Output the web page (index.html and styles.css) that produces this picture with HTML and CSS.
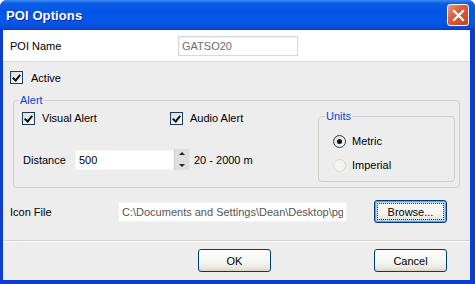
FILE: index.html
```html
<!DOCTYPE html>
<html lang="en">
<head>
  <meta charset="UTF-8" />
  <title>POI Options</title>
  <link rel="stylesheet" href="styles.css">
</head>
<body>

  <div class="window">
    <div class="titlebar">
      <span class="title">POI Options</span>
      <button class="close" aria-label="Close">
        <svg width="13" height="13" viewBox="0 0 13 13">
          <path d="M2 2 L11 11 M11 2 L2 11" stroke="#fff" stroke-width="2.2" stroke-linecap="square" />
        </svg>
      </button>
    </div>

    <div class="client">
      <div class="name-row">
        <label class="name-label">POI Name</label>
        <input class="field name-field" type="text" value="GATSO20" disabled>
      </div>

      <div class="body">
        <div class="active-row">
          <span class="check checked"></span>
          <span>Active</span>
        </div>

        <fieldset class="group alert">
          <legend>Alert</legend>
          <div class="alert-inner">
            <div class="alert-left">
              <div class="check-row">
                <div class="check-item visual">
                  <span class="check checked"></span>
                  <span>Visual Alert</span>
                </div>
                <div class="check-item">
                  <span class="check checked"></span>
                  <span>Audio Alert</span>
                </div>
              </div>
              <div class="distance-row">
                <span class="distance-label">Distance</span>
                <input class="field distance-field" type="text" value="500">
                <div class="spinner">
                  <span class="spin up"></span>
                  <span class="spin down"></span>
                </div>
                <span class="range">20 - 2000 m</span>
              </div>
            </div>

            <fieldset class="group units">
              <legend>Units</legend>
              <div class="radio-row">
                <span class="radio selected"></span>
                <span>Metric</span>
              </div>
              <div class="radio-row">
                <span class="radio disabled"></span>
                <span>Imperial</span>
              </div>
            </fieldset>
          </div>
        </fieldset>

        <div class="icon-row">
          <span class="icon-label">Icon File</span>
          <input class="field icon-field" type="text" value="C:\Documents and Settings\Dean\Desktop\pgps.bmp">
          <button class="btn focused">Browse...</button>
        </div>
      </div>

      <div class="footer">
        <button class="btn">OK</button>
        <button class="btn">Cancel</button>
      </div>
    </div>
  </div>

</body>
</html>
```

FILE: styles.css
```css
* {
  box-sizing: border-box;
}

body {
  margin: 0;
  font-family: 'Liberation Sans', Arial, sans-serif;
  font-size: 11px;
  color: #000;
  background: #fff;
}

.window {
  width: 475px;
  height: 284px;
  background: #0b3ed0;
  border-radius: 7px 7px 0 0;
  display: flex;
  flex-direction: column;
  overflow: hidden;
}

.titlebar {
  height: 30px;
  flex: none;
  display: flex;
  align-items: center;
  justify-content: space-between;
  padding: 0 6px 0 6px;
  background: linear-gradient(#3c8cf5 0%, #0a5ce6 12%, #0255e6 45%, #0558ea 70%, #0a4cd8 92%, #0539c4 100%);
}

.title {
  color: #fff;
  font-weight: bold;
  font-size: 13px;
  text-shadow: 1px 1px 0 #0b2a8a;
  letter-spacing: 0.1px;
}

.close {
  width: 22px;
  height: 22px;
  padding: 0;
  border: 1px solid #fff;
  border-radius: 3px;
  background: linear-gradient(135deg, #ec9a7e 0%, #de5d3c 40%, #c8401f 100%);
  display: flex;
  align-items: center;
  justify-content: center;
}

.client {
  flex: 1;
  margin: 0 5px 4px 3px;
  background: #ededed;
  display: flex;
  flex-direction: column;
}

.name-row {
  height: 32px;
  background: #fff;
  border-bottom: 1px solid #dcdcdc;
  display: flex;
  align-items: center;
  padding-left: 7px;
}

.name-label {
  width: 168px;
}

.field {
  font-family: 'Liberation Sans', Arial, sans-serif;
  font-size: 11px;
  height: 20px;
  padding: 0 3px;
  background: #fff;
  border: 1px solid #e2e2e2;
  outline: none;
  color: #000;
}

.name-field {
  width: 120px;
  border-color: #d8d8d8;
  color: #6d6d6d;
  box-shadow: inset 1px 1px 0 #f0f0f0;
}

.body {
  padding: 0 0 0 7px;
  flex: 1;
}

.active-row {
  height: 31px;
  display: flex;
  align-items: center;
  gap: 8px;
}

.check {
  width: 13px;
  height: 13px;
  flex: none;
  border: 1px solid #1c3b5a;
  background: linear-gradient(135deg, #dcdcd6, #fbfbfb);
  position: relative;
}

.check.checked::after {
  content: "";
  position: absolute;
  left: 3px;
  top: 1px;
  width: 3px;
  height: 6px;
  border: solid #111;
  border-width: 0 2px 2px 0;
  transform: rotate(40deg);
}

.group {
  margin: 0;
  border: 1px solid #d0d0c8;
  border-radius: 4px;
}

.group legend {
  color: #0046d5;
  padding: 0 1px;
  line-height: 14px;
}

.alert {
  width: 447px;
  margin-left: 3px;
  padding: 0 4px 5px 8px;
}

.alert legend {
  margin-left: -3px;
}

.alert-inner {
  display: flex;
}

.alert-left {
  flex: 1;
  padding-top: 3px;
}

.check-row {
  height: 16px;
  display: flex;
  align-items: center;
}

.check-item {
  display: flex;
  align-items: center;
  gap: 7px;
}

.check-item.visual {
  width: 148px;
}

.distance-row {
  margin-top: 23px;
  display: flex;
  align-items: center;
}

.distance-label {
  width: 53px;
  padding-left: 1px;
}

.distance-field {
  width: 99px;
  border-color: #f4f4f4;
}

.spinner {
  width: 15px;
  height: 21px;
  display: flex;
  flex-direction: column;
  background: #dedede;
  border-left: 1px solid #d0d0d0;
}

.spin {
  flex: 1;
  position: relative;
}

.spin::after {
  content: "";
  position: absolute;
  left: 4px;
  top: 3px;
  border-left: 3px solid transparent;
  border-right: 3px solid transparent;
}

.spin.up::after {
  border-bottom: 3px solid #222;
}

.spin.down::after {
  top: 4px;
  border-top: 3px solid #222;
}

.range {
  margin-left: 5px;
}

.units {
  width: 137px;
  height: 73px;
  margin-top: 2px;
  padding: 0 0 0 14px;
}

.units legend {
  margin-left: -8px;
}

.radio-row {
  display: flex;
  align-items: center;
  gap: 6px;
  height: 16px;
  margin-top: 8px;
}

.radio-row:first-of-type {
  margin-top: 10px;
}

.radio {
  width: 13px;
  height: 13px;
  border-radius: 50%;
  border: 1px solid #2a3b4c;
  background: linear-gradient(135deg, #dcdcd6, #fbfbfb);
  display: flex;
  align-items: center;
  justify-content: center;
}

.radio.selected::after {
  content: "";
  width: 5px;
  height: 5px;
  border-radius: 50%;
  background: #111;
}

.radio.disabled {
  border-color: #d6d6d0;
  background: #f4f4f2;
}

.icon-row {
  margin-top: 12px;
  height: 23px;
  display: flex;
  align-items: center;
}

.icon-label {
  width: 108px;
}

.icon-field {
  width: 229px;
  border-color: #f2f2f2;
  color: #555;
  overflow: hidden;
}

.btn {
  width: 73px;
  height: 23px;
  font-family: 'Liberation Sans', Arial, sans-serif;
  font-size: 11px;
  color: #000;
  border: 1px solid #003c74;
  border-radius: 3px;
  background: linear-gradient(#ffffff 0%, #f4f4f0 60%, #e6e4dc 90%, #d6d0c5 100%);
  padding: 0;
}

.btn.focused {
  margin-left: 27px;
  box-shadow: inset 0 0 0 1px #7b9be8, inset 0 0 0 2px #b9d1f6;
  outline: 1px dotted #333;
  outline-offset: -4px;
}

.footer {
  height: 40px;
  flex: none;
  border-top: 1px solid #d2d2d2;
  box-shadow: inset 0 1px 0 #fff;
  display: flex;
  justify-content: flex-end;
  align-items: flex-start;
  gap: 103px;
  padding: 8px 23px 0 0;
}
```
